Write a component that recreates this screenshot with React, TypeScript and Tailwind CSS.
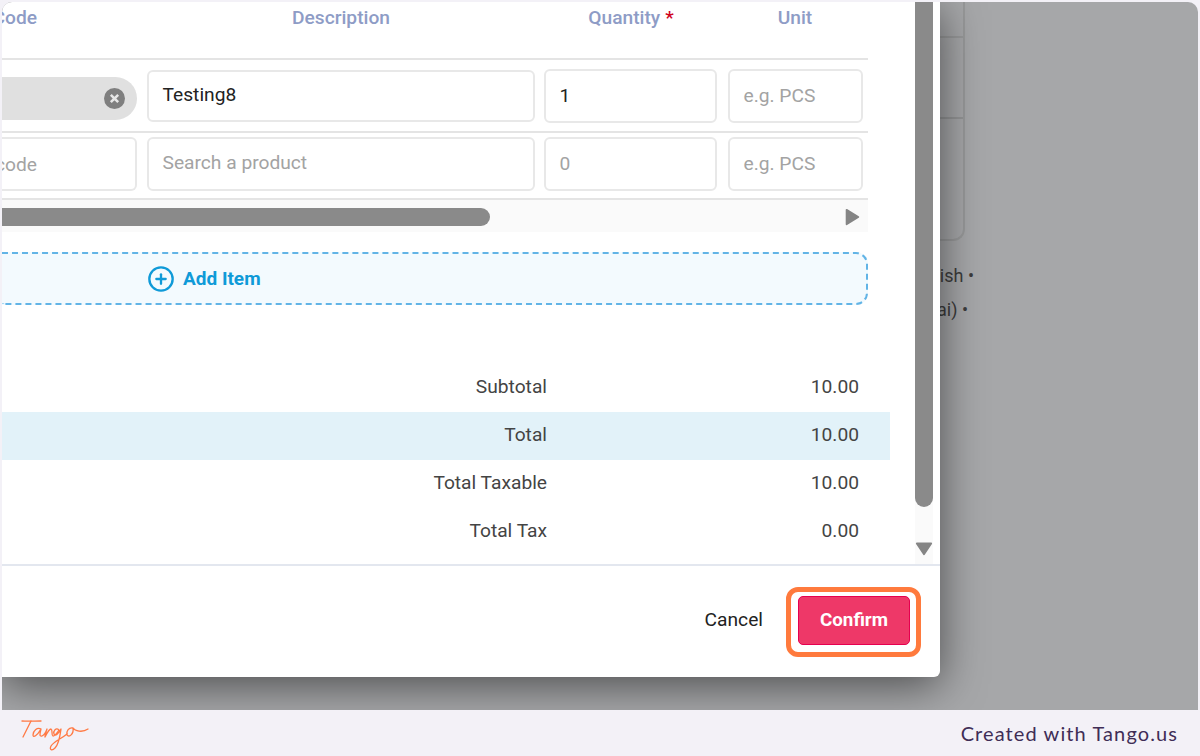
import React from "react";
import { CirclePlus } from "lucide-react";

const inputBase =
  "flex items-center rounded-[6px] border-2 border-[#e8e8e8] bg-white px-[13.5px] text-[19.2px] font-['Roboto',sans-serif]";

function Triangle({ dir, className }: { dir: "right" | "down"; className: string }) {
  return (
    <svg viewBox="0 0 20 20" className={className} fill="#858585" stroke="#858585" strokeWidth="2" strokeLinejoin="round">
      {dir === "right" ? <path d="M4 2 L17 10 L4 18 Z" /> : <path d="M2 5 L18 5 L10 17 Z" />}
    </svg>
  );
}

function Cell({ children, className = "" }: { children?: React.ReactNode; className?: string }) {
  return <div className={`px-[5px] flex items-center ${className}`}>{children}</div>;
}

function TotalRow({ label, value, active }: { label: string; value: string; active?: boolean }) {
  return (
    <div className={`flex h-[48px] items-center pb-[1px] text-[19.2px] text-[#444] ${active ? "bg-[#e2f2f9]" : ""}`}>
      <div className="w-[545px] text-right">{label}</div>
      <div className="w-[312px] text-right">{value}</div>
    </div>
  );
}

export default function App() {
  const head = "text-[19.2px] font-medium text-[#8e9cc6] text-center";
  return (
    <div className="flex h-[756px] w-[1200px] flex-col overflow-hidden bg-[#f3f1f7] font-['Roboto',sans-serif]">
      <div className="relative mx-[2px] mt-[2px] h-[708px] overflow-hidden rounded-t-[10px] bg-[#a6a7a9]">
        {/* page behind the dialog */}
        <div className="flex h-[239px] w-[963px] flex-col rounded-br-[12px] border-r-2 border-b-2 border-[#98999a]">
          <div className="h-[36px] border-b-2 border-[#98999a]" />
          <div className="h-[81px] border-b-2 border-[#949596]" />
        </div>
        <div className="mt-[18px] w-[972px] text-right text-[18px] leading-[34px] text-[#3c3c3c]">English •</div>
        <div className="w-[966px] text-right text-[18px] leading-[34px] text-[#3c3c3c]">(Thai) •</div>

        {/* dialog */}
        <div className="absolute top-0 left-0 flex h-[675px] w-[938px] flex-col rounded-br-[6px] bg-white shadow-[0_8px_44px_rgba(0,0,0,0.55)]">
          <div className="flex h-[562px] flex-none">
            <div className="w-[913px] flex-none">
              <div className="w-[866px]">
                <div className="grid h-[58px] grid-cols-[140px_398px_182px_146px] border-b-2 border-[#e4e4e4] pb-[23px]">
                  <div className="flex items-center justify-end overflow-hidden pr-[105px]">
                    <span className={`${head} whitespace-nowrap`}>Item Code</span>
                  </div>
                  <div className={`${head} flex items-center justify-center`}>Description</div>
                  <div className={`${head} flex items-center justify-center`}>
                    Quantity<span className="ml-[5px] text-[#d0021b]">*</span>
                  </div>
                  <div className={`${head} flex items-center justify-center`}>Unit</div>
                </div>
                <div className="grid h-[73px] grid-cols-[140px_398px_182px_146px] border-b-2 border-[#e4e4e4]">
                  <Cell className="pl-0 pt-[6px]">
                    <div className="flex h-[43px] w-full items-center justify-end rounded-r-[22px] bg-[#e0e0e0] pr-[12px]">
                      <svg viewBox="0 0 20 20" className="h-[21px] w-[21px]">
                        <circle cx="10" cy="10" r="10" fill="#7f7f7f" />
                        <path d="M6.5 6.5 L13.5 13.5 M13.5 6.5 L6.5 13.5" stroke="#e6e6e6" strokeWidth="2.4" />
                      </svg>
                    </div>
                  </Cell>
                  <Cell>
                    <div className={`${inputBase} h-[52px] w-full text-[#222]`}>Testing8</div>
                  </Cell>
                  <Cell className="pl-[4px]">
                    <div className={`${inputBase} h-[54px] w-full pt-[2px] text-[#222]`}>1</div>
                  </Cell>
                  <Cell className="pl-[6px]">
                    <div className={`${inputBase} h-[54px] w-full pt-[2px] text-[#a3a3a3]`}>e.g. PCS</div>
                  </Cell>
                </div>
                <div className="grid h-[67px] grid-cols-[140px_398px_182px_146px] border-b-2 border-[#e4e4e4] pb-[4px]">
                  <Cell className="pl-0">
                    <div className={`${inputBase} h-[54px] w-full justify-end overflow-hidden rounded-l-none border-l-0 pt-[4px] pr-[98px] whitespace-nowrap text-[#a3a3a3]`}>
                      Item code
                    </div>
                  </Cell>
                  <Cell>
                    <div className={`${inputBase} h-[54px] w-full text-[#a3a3a3]`}>Search a product</div>
                  </Cell>
                  <Cell className="pl-[4px]">
                    <div className={`${inputBase} h-[54px] w-full pt-[2px] text-[#a3a3a3]`}>0</div>
                  </Cell>
                  <Cell className="pl-[6px]">
                    <div className={`${inputBase} h-[54px] w-full pt-[2px] text-[#a3a3a3]`}>e.g. PCS</div>
                  </Cell>
                </div>
                <div className="flex h-[32px] items-center justify-between bg-[#fafafa] pt-[2px] pr-[7px]">
                  <div className="h-[18px] w-[488px] rounded-r-[9px] bg-[#8a8a8a]" />
                  <Triangle dir="right" className="h-[22px] w-[18px]" />
                </div>
                <div className="mt-[20px] flex h-[53px] items-center rounded-r-[12px] border-y-2 border-r-2 border-dashed border-[#62b4e6] bg-[#f3fafe] pl-[145px]">
                  <CirclePlus className="h-[28px] w-[28px] text-[#0f9ad8]" strokeWidth={2} />
                  <span className="mt-[1px] ml-[8px] text-[19px] font-bold text-[#0f9ad8]">Add Item</span>
                </div>
              </div>
              <div className="mt-[59px] w-[888px]">
                <TotalRow label="Subtotal" value="10.00" />
                <TotalRow label="Total" value="10.00" active />
                <TotalRow label="Total Taxable" value="10.00" />
                <TotalRow label="Total Tax" value="0.00" />
              </div>
            </div>
            <div className="flex w-[18px] flex-none flex-col items-center justify-between bg-[#fafafa] pb-[7px]">
              <div className="h-[505px] w-full rounded-b-[9px] bg-[#8a8a8a]" />
              <Triangle dir="down" className="h-[18px] w-[22px] flex-none" />
            </div>
          </div>
          <div className="flex flex-1 items-center justify-end border-t-2 border-[#e3e7ef] pr-[30px] pb-[3px]">
            <span className="mr-[35px] text-[19.2px] text-[#222]">Cancel</span>
            <div className="relative">
              <button className="h-[49px] w-[112px] rounded-[5px] border border-[#e6004f] bg-[#ee3868] text-[18.8px] font-bold text-white">
                Confirm
              </button>
              <div className="absolute -top-[9px] -right-[11px] -bottom-[12px] -left-[12px] rounded-[12px] border-[5px] border-[#ff7a3d]" />
            </div>
          </div>
        </div>
      </div>
      <div className="flex flex-1 items-center justify-between pr-[22px] pl-[15px]">
        <svg viewBox="0 0 80 42" className="h-[42px] w-[80px]" fill="none" stroke="#ff7a45" strokeWidth="1.3" strokeLinecap="round" strokeLinejoin="round" role="img" aria-label="Tango logo">
          <path d="M7 9 C13 9.5 20 9 26 9" />
          <path d="M16 9 C13 15 10 21 8 25" />
          <path d="M26 17 C22 15 18 19 18 23 C18 26 22 24 26 17 C25 21 24 25 27 24 C29 23 31 20 32 17 C31 20 30 23 30 25 C32 21 34 17 36 17 C38 18 36 23 38 24 C40 24 42 21 44 18 C41 15 38 19 39 22 C40 25 44 21 46 17 C45 24 44 32 40 36 C37 39 34 38 36 34 C39 29 46 27 52 22" />
          <path d="M58 16 C54 15 51 19 52 23 C54 26 59 22 58 16 C60 19 67 21 73 17" />
        </svg>
        <span className="font-['Lato',sans-serif] text-[20px] tracking-[1.1px] text-[#3f2d56]">Created with Tango.us</span>
      </div>
    </div>
  );
}
